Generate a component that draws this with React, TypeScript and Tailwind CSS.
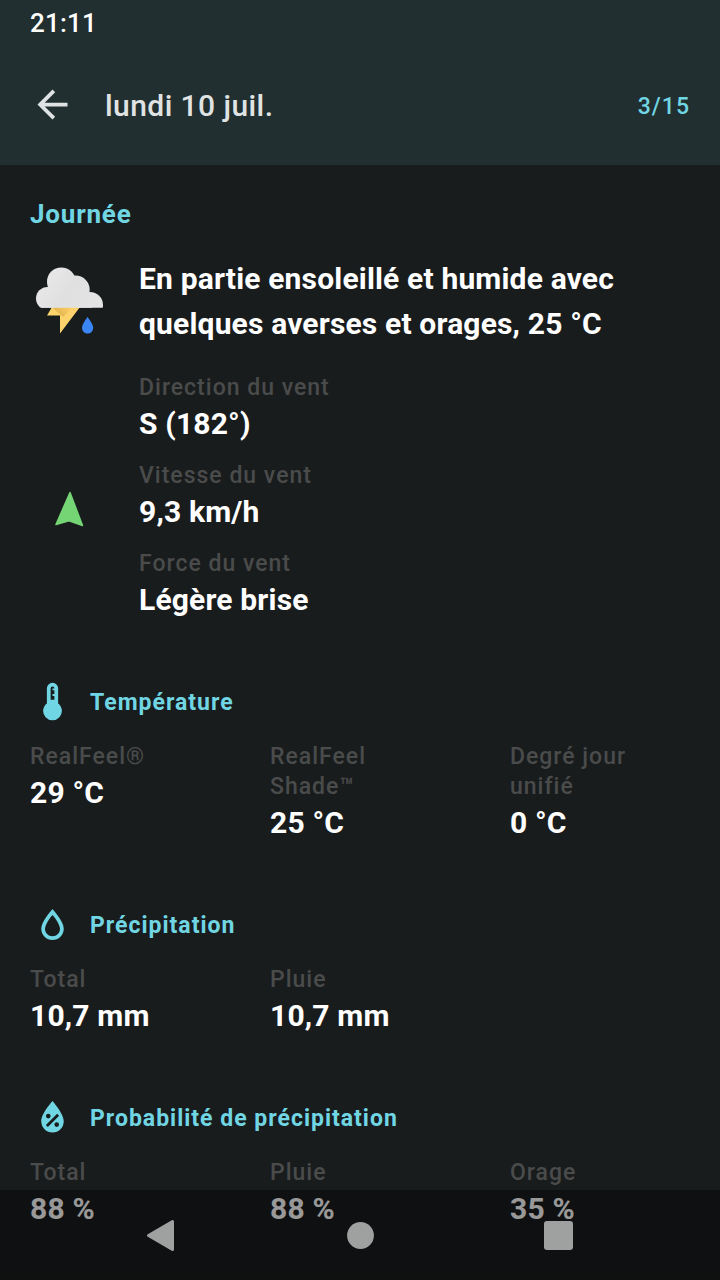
import type { ReactNode } from 'react';

const CYAN = 'text-[#71d6e3]';

function Field({ label, value }: { label: string; value: string }) {
  return (
    <div>
      <div className="pt-px text-[23px] leading-[30px] font-medium tracking-[1px] text-[#4a4b4b]">{label}</div>
      <div className="-mt-0.5 pb-px text-[30px] leading-[45px] font-bold tracking-[0.17px] text-white">{value}</div>
    </div>
  );
}

function Icon({ children }: { children: ReactNode }) {
  return (
    <svg viewBox="0 0 24 24" className="h-[45px] w-[45px] shrink-0" fill="currentColor" fillRule="evenodd">
      {children}
    </svg>
  );
}

function Section({ title, icon, fields }: { title: string; icon: ReactNode; fields: [string, string][] }) {
  return (
    <section>
      <h2 className={`flex h-[45px] items-center gap-[15px] text-[23px] font-bold tracking-[1px] ${CYAN}`}>
        <Icon>{icon}</Icon>
        <span className="pt-[3px]">{title}</span>
      </h2>
      <div className="mt-[17px] grid grid-cols-[150px_150px_150px] gap-x-[90px]">
        {fields.map(([label, value]) => (
          <Field key={label} label={label} value={value} />
        ))}
      </div>
    </section>
  );
}

function StormIcon() {
  return (
    <svg viewBox="0 0 76 76" className="h-[76px] w-[76px]">
      <defs>
        <linearGradient id="cloud" gradientUnits="userSpaceOnUse" x1="8" y1="12" x2="62" y2="50">
          <stop offset="0" stopColor="#e9e9e9" />
          <stop offset="0.5" stopColor="#e0e0e0" />
          <stop offset="1" stopColor="#e4e4e4" />
        </linearGradient>
        <linearGradient id="fold" gradientUnits="userSpaceOnUse" x1="26" y1="52" x2="35" y2="43">
          <stop offset="0" stopColor="#e3b453" />
          <stop offset="1" stopColor="#fbcf67" />
        </linearGradient>
        <clipPath id="base">
          <rect x="0" y="0" width="76" height="45.700" />
        </clipPath>
      </defs>
      <path d="M20 45L15 53.500H28V71.500L48 45Z" fill="#ffd36b" />
      <path d="M20 45L31 55L41 45Z" fill="url(#fold)" />
      <g clipPath="url(#base)" fill="url(#cloud)">
        <circle cx="15.500" cy="36.500" r="11.500" />
        <circle cx="29.300" cy="19.700" r="14.300" />
        <circle cx="43.500" cy="27.800" r="14.200" />
        <circle cx="58" cy="43" r="13" />
        <path d="M9 46V35H18V22H50V36H60V46Z" />
      </g>
      <path d="M55.500 55C55.500 55 50 62 50 66A5.600 5.600 0 0 0 61.200 66C61.200 62 55.500 55 55.500 55Z" fill="#3b86f7" />
    </svg>
  );
}

export default function App() {
  return (
    <div className="relative flex h-[1280px] w-[720px] flex-col overflow-hidden bg-[#191c1d] font-['Roboto',sans-serif]">
      <header className="h-[165px] shrink-0 bg-[#222f30]">
        <div className="flex h-[45px] items-center pt-0.5 pl-[30px] text-[26px] font-medium tracking-[0.2px] text-white">21:11</div>
        <div className="flex h-[120px] items-center pr-[30px] pl-[30px]">
          <svg viewBox="0 0 24 24" className="mb-0.5 h-[45px] w-[45px]" fill="#e0e3e3">
            <path d="M20 11H7.830L13.420 5.410L12 4L4 12L12 20L13.410 18.590L7.830 13H20Z" />
          </svg>
          <h1 className="ml-[30px] flex-1 text-[30px] font-medium tracking-[0.43px] text-[#e0e3e3]">lundi 10 juil.</h1>
          <span className={`pt-[5px] text-[23px] font-medium tracking-[1px] ${CYAN}`}>3/15</span>
        </div>
      </header>

      <main className="px-[30px] pt-[30px]">
        <h2 className={`text-[26px] leading-[38px] font-bold tracking-[0.8px] ${CYAN}`}>Journée</h2>
        <div className="mt-[23px] flex">
          <div className="w-[109px] shrink-0 pt-[6px] pl-[2px]">
            <StormIcon />
          </div>
          <p className="w-[520px] text-[30px] leading-[45px] font-bold tracking-[0.17px] text-white">
            En partie ensoleillé et humide avec quelques averses et orages, 25 °C
          </p>
        </div>
        <div className="mt-[26px] flex items-center">
          <div className="w-[109px] shrink-0 pt-[23px] pl-[24px]">
            <svg viewBox="0 0 30 38" className="h-[38px] w-[30px]">
              <path d="M16 2.500L28.500 35.500L15 30.800L2 34.500Z" fill="#75d575" stroke="#75d575" strokeWidth="1.500" strokeLinejoin="round" />
            </svg>
          </div>
          <div className="flex flex-col gap-[13px]">
            <Field label="Direction du vent" value="S (182°)" />
            <Field label="Vitesse du vent" value="9,3 km/h" />
            <Field label="Force du vent" value="Légère brise" />
          </div>
        </div>

        <div className="mt-14 flex flex-col gap-14">
          <Section
            title="Température"
            icon={
              <path d="M15 13V5A3 3 0 0 0 9 5V13A5 5 0 1 0 15 13M12 4A1 1 0 0 1 13 5H12V6H13V8H12V9H13V11H11V5A1 1 0 0 1 12 4Z" />
            }
            fields={[
              ['RealFeel®', '29 °C'],
              ['RealFeel Shade™', '25 °C'],
              ['Degré jour unifié', '0 °C'],
            ]}
          />
          <Section
            title="Précipitation"
            icon={
              <path d="M12 3.770L11.250 4.610C11.250 4.610 9.970 6.060 8.680 7.940C7.390 9.820 6 12.070 6 14.230A6 6 0 0 0 18 14.230C18 12.070 16.610 9.820 15.320 7.940C14.030 6.060 12.750 4.610 12.750 4.610L12 3.770M12 6.900C12.440 7.420 12.840 7.850 13.680 9.070C14.890 10.830 16 13.070 16 14.230C16 16.450 14.220 18.230 12 18.230C9.780 18.230 8 16.450 8 14.230C8 13.070 9.110 10.830 10.320 9.070C11.160 7.850 11.560 7.420 12 6.900Z" />
            }
            fields={[
              ['Total', '10,7 mm'],
              ['Pluie', '10,7 mm'],
            ]}
          />
          <Section
            title="Probabilité de précipitation"
            icon={
              <path d="M12 3.250C12 3.250 6 10 6 14A6 6 0 0 0 18 14C18 10 12 3.250 12 3.250M14.470 9.970L15.530 11.030L9.530 17.030L8.470 15.970M9.750 10A1.250 1.250 0 0 1 9.750 12.500A1.250 1.250 0 0 1 9.750 10M14.250 14.500A1.250 1.250 0 0 1 14.250 17A1.250 1.250 0 0 1 14.250 14.500Z" />
            }
            fields={[
              ['Total', '88 %'],
              ['Pluie', '88 %'],
              ['Orage', '35 %'],
            ]}
          />
        </div>
      </main>

      <nav className="absolute inset-x-0 bottom-0 h-[90px] bg-black/40">
        <svg viewBox="0 0 720 90" className="h-[90px] w-[720px]" fill="#9fa1a1">
          <path d="M148.500 45.500L172.500 31.500V59.500Z" stroke="#9fa1a1" strokeWidth="3" strokeLinejoin="round" />
          <circle cx="360.500" cy="45.500" r="13.400" />
          <rect x="544" y="31" width="29" height="29" rx="3" />
        </svg>
      </nav>
    </div>
  );
}
